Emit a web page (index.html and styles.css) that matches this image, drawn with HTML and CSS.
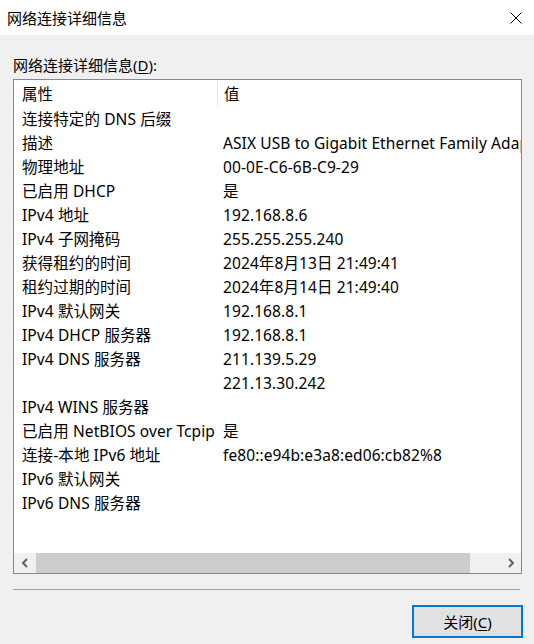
FILE: index.html
```html
<!DOCTYPE html>
<html lang="zh-CN">
<head>
<meta charset="utf-8">
<title>网络连接详细信息</title>
<link rel="stylesheet" href="styles.css">
</head>
<body>
<div class="window">
  <div class="titlebar">
    <span class="title">网络连接详细信息</span>
    <svg class="close" width="12" height="12" viewBox="0 0 12 12"><path d="M0.5 0.5 L11.5 11.5 M11.5 0.5 L0.5 11.5" stroke="#000" stroke-width="1" fill="none"/></svg>
  </div>
  <div class="body">
    <div class="label">网络连接详细信息(<u>D</u>):</div>
    <div class="list">
      <div class="viewport">
        <div class="row header"><div class="c1">属性</div><div class="c2 hc2">值</div></div>
        <div class="row"><div class="c1">连接特定的 DNS 后缀</div><div class="c2"></div></div>
        <div class="row"><div class="c1">描述</div><div class="c2">ASIX USB to Gigabit Ethernet Family Adapter</div></div>
        <div class="row"><div class="c1">物理地址</div><div class="c2">00-0E-C6-6B-C9-29</div></div>
        <div class="row"><div class="c1">已启用 DHCP</div><div class="c2">是</div></div>
        <div class="row"><div class="c1">IPv4 地址</div><div class="c2">192.168.8.6</div></div>
        <div class="row"><div class="c1">IPv4 子网掩码</div><div class="c2">255.255.255.240</div></div>
        <div class="row"><div class="c1">获得租约的时间</div><div class="c2">2024年8月13日 21:49:41</div></div>
        <div class="row"><div class="c1">租约过期的时间</div><div class="c2">2024年8月14日 21:49:40</div></div>
        <div class="row"><div class="c1">IPv4 默认网关</div><div class="c2">192.168.8.1</div></div>
        <div class="row"><div class="c1">IPv4 DHCP 服务器</div><div class="c2">192.168.8.1</div></div>
        <div class="row"><div class="c1">IPv4 DNS 服务器</div><div class="c2">211.139.5.29</div></div>
        <div class="row"><div class="c1"></div><div class="c2">221.13.30.242</div></div>
        <div class="row"><div class="c1">IPv4 WINS 服务器</div><div class="c2"></div></div>
        <div class="row"><div class="c1">已启用 NetBIOS over Tcpip</div><div class="c2">是</div></div>
        <div class="row"><div class="c1">连接-本地 IPv6 地址</div><div class="c2">fe80::e94b:e3a8:ed06:cb82%8</div></div>
        <div class="row"><div class="c1">IPv6 默认网关</div><div class="c2"></div></div>
        <div class="row"><div class="c1">IPv6 DNS 服务器</div><div class="c2"></div></div>
      </div>
      <div class="hscroll">
        <div class="sbtn"><svg width="8" height="10" viewBox="0 0 8 10"><path d="M6 1 L2 5 L6 9" stroke="#606060" stroke-width="2" fill="none"/></svg></div>
        <div class="track"><div class="thumb"></div></div>
        <div class="sbtn"><svg width="8" height="10" viewBox="0 0 8 10"><path d="M2 1 L6 5 L2 9" stroke="#606060" stroke-width="2" fill="none"/></svg></div>
      </div>
    </div>
    <div class="sep"></div>
    <div class="footer">
      <button class="btn">关闭(<u>C</u>)</button>
    </div>
  </div>
</div>
</body>
</html>
```

FILE: styles.css
```css
* { box-sizing: border-box; }
html, body { margin: 0; padding: 0; }
body {
  width: 534px;
  height: 644px;
  overflow: hidden;
  background: #f0f0f0;
  font-family: "Noto Sans", "Noto Sans CJK SC", sans-serif;
  font-size: 15px;
  color: #000;
}
.window { display: flex; flex-direction: column; height: 644px; }
.titlebar {
  height: 35px;
  background: #fff;
  display: flex;
  align-items: center;
  justify-content: space-between;
  padding: 0 12px 0 7px;
}
.title { font-size: 15px; line-height: 20px; }
.close { display: block; }
.body { padding: 20px 0 0 13px; display: flex; flex-direction: column; }
.label { line-height: 20px; height: 20px; }
.label u, .btn u { text-decoration-thickness: 1px; text-underline-offset: 2px; }
.list {
  margin-top: 4px;
  width: 509px;
  height: 495px;
  border: 1px solid #828790;
  background: #fff;
  display: flex;
  flex-direction: column;
}
.viewport { flex: 1; overflow: hidden; }
.row {
  display: flex;
  height: 24px;
  line-height: 24px;
  white-space: nowrap;
  font-size: 15.5px;
  letter-spacing: 0.1px;
}
.row.header { height: 27px; line-height: 28px; }
.c1 { width: 203px; flex: none; padding-left: 8px; }
.c2 { flex: none; padding-left: 6px; }
.hc2 { border-left: 1px solid #e5e5e5; height: 27px; }
.hscroll { height: 20px; display: flex; background: #f0f0f0; flex: none; }
.sbtn { width: 21px; display: flex; align-items: center; justify-content: center; flex: none; }
.track { flex: 1; display: flex; padding-left: 1px; }
.thumb { width: 434px; background: #cdcdcd; }
.sep { margin-top: 15px; width: 507px; height: 1px; background: #a0a0a0; }
.footer { display: flex; justify-content: flex-end; padding-right: 11px; margin-top: 15px; }
.btn {
  width: 111px;
  height: 33px;
  border: 2px solid #0078d7;
  background: #e1e1e1;
  font-family: inherit;
  font-size: 15px;
  color: #000;
  padding: 0;
}
```
